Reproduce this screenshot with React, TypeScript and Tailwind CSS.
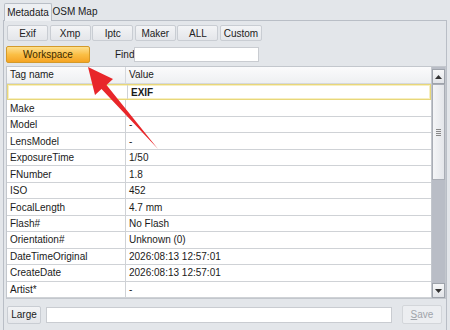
import React from "react";

const rows: [string, string, boolean?][] = [
  ["", "EXIF", true],
  ["Make", ""],
  ["Model", "-"],
  ["LensModel", "-"],
  ["ExposureTime", "1/50"],
  ["FNumber", "1.8"],
  ["ISO", "452"],
  ["FocalLength", "4.7 mm"],
  ["Flash#", "No Flash"],
  ["Orientation#", "Unknown (0)"],
  ["DateTimeOriginal", "2026:08:13 12:57:01"],
  ["CreateDate", "2026:08:13 12:57:01"],
  ["Artist*", "-"],
];

const btn =
  "h-[16px] w-[41px] flex items-center justify-center border border-[#c9cdd3] rounded-[2px] bg-gradient-to-b from-[#f3f4f6] to-[#e4e6ea] text-[#222]";

export default function App() {
  return (
    <div
      className="relative w-[450px] h-[330px] overflow-hidden bg-[#e3e6ea] text-[10px] text-[#1a1a1a] whitespace-nowrap"
      style={{ fontFamily: '"Liberation Sans", Arial, sans-serif' }}
    >
      {/* tabs */}
      <div className="h-[20px] flex items-end pl-[4px]">
        <div className="h-[18px] w-[48px] flex items-center justify-center border border-b-0 border-[#b9bec6] bg-[#eef0f3] rounded-t-[2px] relative top-px z-10">
          Metadata
        </div>
        <div className="h-[17px] w-[46px] flex items-center justify-center">OSM Map</div>
      </div>
      {/* panel */}
      <div className="mx-[3px] h-[310px] border-t border-l border-r border-[#b9bec6] bg-[#e3e6ea] flex flex-col">
        <div className="flex gap-[1.6px] pl-[3px] pt-[4px]">
          <div className={btn}>Exif</div>
          <div className={btn}>Xmp</div>
          <div className={btn}>Iptc</div>
          <div className={btn}>Maker</div>
          <div className={btn}>ALL</div>
          <div className={btn + " w-[42px]"}>Custom</div>
        </div>
        <div className="flex items-center pl-[2px] mt-[4px] h-[18px]">
          <div className="h-[17px] w-[84px] flex items-center justify-center rounded-[2px] border border-[#d49a2a] bg-gradient-to-b from-[#fde08c] via-[#fbbf45] to-[#f5a422] text-[#3a2a00]">
            Workspace
          </div>
          <div className="ml-[25px] w-[19px]">Find</div>
          <div className="h-[15px] w-[125px] bg-white border border-[#c9ccd1]" />
        </div>
        {/* table */}
        <div className="mt-[3px] ml-[2px] h-[233px] bg-[#f3f4f6] border border-[#c3c7cd] flex">
          <div className="flex-1 flex flex-col">
            <div className="h-[17px] flex bg-gradient-to-b from-[#fbfbfc] to-[#eef0f2] border-b border-[#d5d8dc]">
              <div className="w-[119px] pl-[3px] flex items-center border-r border-[#d5d8dc]">Tag name</div>
              <div className="flex-1 pl-[3px] flex items-center">Value</div>
            </div>
            {rows.map(([k, v, hl], i) => (
              <div
                key={i}
                className={
                  "h-[16.5px] flex bg-white " +
                  (hl ? "border border-[#e8d77a] shadow-[inset_0_0_0_1px_#f7efc2]" : "border-b border-[#cfd2d6]")
                }
              >
                <div className={"w-[119px] pl-[3px] flex items-center " + (hl ? "" : "border-r border-[#cfd2d6]")}>{k}</div>
                <div className={"flex-1 pl-[3px] flex items-center " + (hl ? "font-bold border-l border-[#cfd2d6]" : "")}>{v}</div>
              </div>
            ))}
          </div>
          {/* scrollbar */}
          <div className="w-[14px] flex flex-col border-l border-[#c3c7cd] bg-[#b9bdc6]">
            <div className="h-[15px] mt-[2px] bg-gradient-to-b from-[#f6f7f8] to-[#e2e4e8] border border-[#9ea3ab] flex items-center justify-center">
              <svg width="7" height="4" viewBox="0 0 7 4"><path d="M0 4 L3.5 0 L7 4Z" fill="#333" /></svg>
            </div>
            <div className="h-[96px] bg-gradient-to-r from-[#f4f5f7] to-[#e4e6ea] border border-[#a9adb5] flex items-center justify-center">
              <div className="w-[5px] flex flex-col gap-[1px]">
                <div className="h-px bg-[#888]" />
                <div className="h-px bg-[#888]" />
                <div className="h-px bg-[#888]" />
                <div className="h-px bg-[#888]" />
              </div>
            </div>
            <div className="flex-1" />
            <div className="h-[15px] bg-gradient-to-b from-[#f6f7f8] to-[#e2e4e8] border border-[#9ea3ab] flex items-center justify-center">
              <svg width="7" height="4" viewBox="0 0 7 4"><path d="M0 0 L3.5 4 L7 0Z" fill="#333" /></svg>
            </div>
          </div>
        </div>
        {/* bottom */}
        <div className="flex items-center mt-[6px] pl-[3px] h-[19px]">
          <div className="h-[18px] w-[34px] flex items-center justify-center border border-[#c9cdd3] rounded-[2px] bg-gradient-to-b from-[#f3f4f6] to-[#e4e6ea]">
            Large
          </div>
          <div className="ml-[5px] h-[16px] w-[346px] bg-white border border-[#c9ccd1]" />
          <div className="ml-[10px] h-[19px] w-[40px] flex items-center justify-center border border-[#d3d6da] rounded-[2px] bg-[#eceef1] text-[#a0a4aa]">
            <span><span className="underline">S</span>ave</span>
          </div>
        </div>
      </div>
      {/* red arrow */}
      <svg className="absolute left-0 top-0 pointer-events-none" width="450" height="330">
        <polygon
          points="88,67 113,79 106.5,85 158,149 101.5,89 95,95"
          fill="#e8262a"
        />
      </svg>
    </div>
  );
}
